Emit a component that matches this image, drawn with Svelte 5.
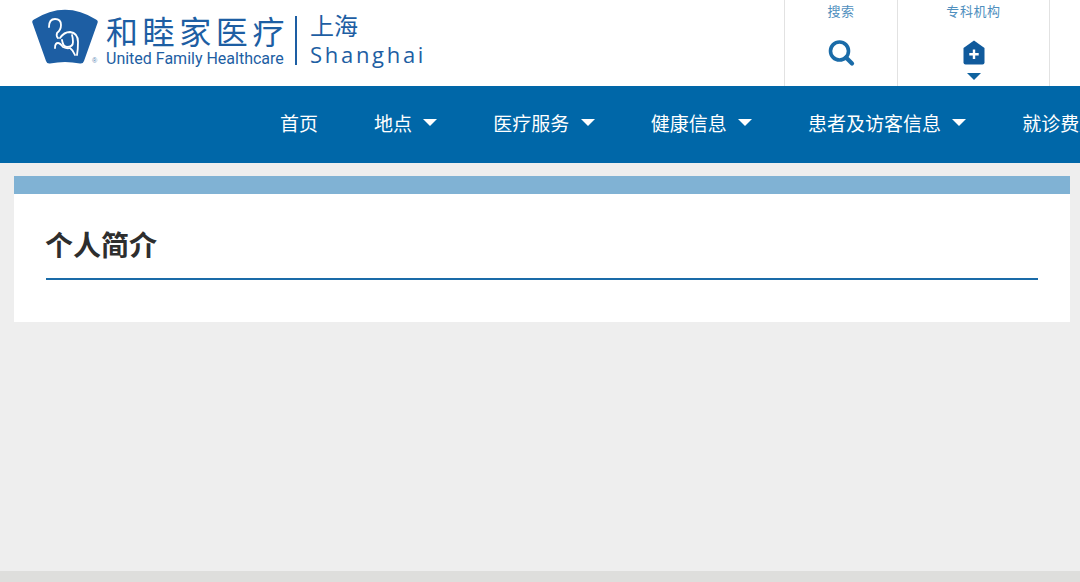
<script>
  // top navigation, carets are drawn with css
  const nav = [
    { label: '首页' },
    { label: '地点', caret: true },
    { label: '医疗服务', caret: true },
    { label: '健康信息', caret: true },
    { label: '患者及访客信息', caret: true },
    { label: '就诊费用' },
  ];
</script>

<div class="page">
  <header class="top">
    <a class="logo" href="#top">
      <svg class="mark" width="68" height="56" viewBox="0 0 68 56">
        <path d="M1.5 14 Q0.5 11.5 3 10.5 Q34 -9 65 10.5 Q67.5 11.5 66.5 14 L53 52 Q52 55 49 54.5 Q34 51.5 19 54.5 Q16 55 15 52 Z" fill="#1d5ea3" />
        <g fill="none" stroke="#fff" stroke-width="1.8" stroke-linecap="round" stroke-linejoin="round">
          <path d="M18 18 Q18 10 24 10 Q30 10 30 16 Q30 21 26 24 Q25 27 27 29" />
          <path d="M29 29 Q33 23 39 23 Q47 24 47 33 Q47 41 46 46" />
          <path d="M31 31 Q32 38 36 38 Q42 38 42 33 Q42 29 41 26" />
          <path d="M24 39 Q24 34 27 34 Q29 34 32 38 Q36 40 39 39 Q42 41 44 46" />
        </g>
      </svg>
      <span class="reg">®</span>
      <div class="brand">
        <span class="cn">和睦家医疗</span>
        <span class="en">United Family Healthcare</span>
      </div>
      <i class="divider"></i>
      <div class="city">
        <span class="city-cn">上海</span>
        <span class="city-en">Shanghai</span>
      </div>
    </a>
    <div class="tools">
      <div class="tool search">
        <span class="tool-label">搜索</span>
        <svg width="28" height="28" viewBox="0 0 28 28">
          <circle cx="12.5" cy="12" r="9" fill="none" stroke="#1a6ba8" stroke-width="3.6" />
          <path d="M19 18.5 L25 24.5" stroke="#1a6ba8" stroke-width="4.2" stroke-linecap="round" />
        </svg>
      </div>
      <div class="tool clinics">
        <span class="tool-label">专科机构</span>
        <svg width="22" height="25" viewBox="0 0 22 25">
          <path d="M11 0.5 L21.5 8 V22.5 Q21.5 24.5 19.5 24.5 H2.5 Q0.5 24.5 0.5 22.5 V8 Z" fill="#105a9c" />
          <path d="M11 9.5 V19 M6.3 14.2 H15.7" stroke="#fff" stroke-width="2.4" />
        </svg>
        <i class="tool-caret"></i>
      </div>
    </div>
  </header>

  <nav class="nav">
    {#each nav as item}
      <a class="nav-item" href="#top">
        {item.label}
        {#if item.caret}<i class="caret"></i>{/if}
      </a>
    {/each}
  </nav>

  <main class="content">
    <div class="band"></div>
    <section class="card">
      <h1>个人简介</h1>
    </section>
  </main>

  <footer class="foot"></footer>
</div>

<style>
  :global(body) {
    margin: 0;
    background: #eeeeee;
    overflow: hidden;
  }
  .page {
    width: 1080px;
    height: 582px;
    display: flex;
    flex-direction: column;
    overflow: hidden;
    font-family: "Noto Sans CJK SC", "Liberation Sans", sans-serif;
  }
  .top {
    height: 86px;
    flex: none;
    background: #fff;
    display: flex;
    justify-content: space-between;
  }
  .logo {
    display: flex;
    align-items: flex-start;
    padding: 9px 0 0 31px;
    color: #1d5ea3;
    text-decoration: none;
    position: relative;
  }
  .reg {
    position: absolute;
    left: 92px;
    top: 57px;
    font: 7px "Liberation Sans", sans-serif;
    color: #5b86b5;
  }
  .brand {
    display: flex;
    flex-direction: column;
    margin-left: 7px;
  }
  .cn {
    font-size: 32px;
    font-weight: 400;
    line-height: 34px;
    margin-top: 4px;
    letter-spacing: 4.6px;
    white-space: nowrap;
  }
  .en {
    font: 400 16px/18px Roboto, "Liberation Sans", sans-serif;
    margin-top: 3px;
    white-space: nowrap;
  }
  .divider {
    width: 2px;
    height: 49px;
    background: #1d5ea3;
    margin: 7px 0 0 6px;
  }
  .city {
    display: flex;
    flex-direction: column;
    margin-left: 13px;
  }
  .city-cn {
    font-size: 24px;
    font-weight: 400;
    line-height: 30px;
    margin-top: 1px;
  }
  .city-en {
    font: 400 22px/26px "Open Sans", sans-serif;
    letter-spacing: 2.7px;
    margin-top: 1px;
  }
  .tools {
    display: flex;
    margin-right: 30px;
  }
  .tool {
    display: flex;
    flex-direction: column;
    align-items: center;
    border-left: 1px solid #e2e2e2;
    position: relative;
  }
  .search {
    width: 112px;
  }
  .clinics {
    width: 151px;
    border-right: 1px solid #e2e2e2;
  }
  .tool-label {
    font: 13px/16px "Liberation Serif", "Noto Sans CJK SC", serif;
    color: #4f8fbe;
    margin-top: 4px;
    letter-spacing: 0.6px;
  }
  .search svg {
    margin-top: 19px;
  }
  .clinics svg {
    margin-top: 20px;
  }
  .tool-caret {
    width: 0;
    height: 0;
    margin-top: 8px;
    border-left: 7px solid transparent;
    border-right: 7px solid transparent;
    border-top: 7px solid #0f639f;
  }
  .nav {
    height: 77px;
    flex: none;
    box-sizing: border-box;
    background: #0067a8;
    display: flex;
    align-items: center;
    padding: 0 0 4px 252px;
    white-space: nowrap;
  }
  .nav-item {
    display: flex;
    align-items: center;
    padding: 0 28px;
    color: #fff;
    font-size: 19px;
    text-decoration: none;
  }
  .caret {
    width: 0;
    height: 0;
    margin-left: 11.3px;
    border-left: 7.25px solid transparent;
    border-right: 7.25px solid transparent;
    border-top: 7px solid #fff;
  }
  .content {
    flex: 1;
    padding: 13px 10px 0 14px;
  }
  .band {
    height: 18px;
    background: #80b2d4;
  }
  .card {
    height: 128px;
    box-sizing: border-box;
    background: #fff;
    padding: 32px 32px 0;
  }
  h1 {
    margin: 0;
    height: 54px;
    box-sizing: border-box;
    border-bottom: 2px solid #1a6ba8;
    color: #2e2e2e;
    font-size: 28px;
    font-weight: 700;
    line-height: 36px;
    text-indent: -1px;
  }
  .foot {
    height: 11px;
    flex: none;
    background: #dededc;
  }
</style>
